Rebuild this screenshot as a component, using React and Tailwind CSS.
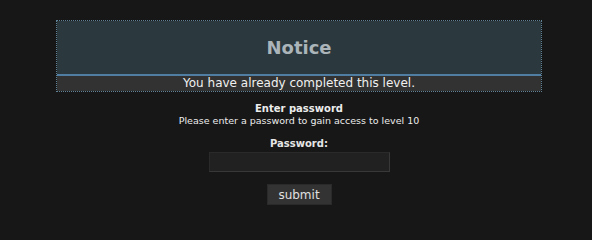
export default function App() {
    return (
        <div className="min-h-screen bg-[#171717] pt-5 font-['DejaVu_Sans',sans-serif]">
            <div className="ml-[56px] w-[486px] flex flex-col items-center">
                {/* Notice box */}
                <div className="w-full border border-dotted border-[#5f8297]">
                    <div className="h-[53px] bg-[#2b383e] flex items-center justify-center text-[18px] font-bold text-[#aab4b9]">
                        Notice
                    </div>
                    <div className="border-t-2 border-[#4f7ea2] bg-[#323232] text-center text-[12px] leading-[15px] text-[#f0f0f0]">
                        You have already completed this level.
                    </div>
                </div>

                {/* Form */}
                <div className="mt-[11px] text-center text-[10px] leading-[12px] text-[#ececec]">
                    <div className="font-bold">Enter password</div>
                    <div className="text-[9.5px]">Please enter a password to gain access to level 10</div>
                </div>
                <form className="mt-[11px] flex flex-col items-center">
                    <label className="text-[10px] leading-[12px] font-bold text-[#e6e6e6]">Password:</label>
                    <input
                        type="password"
                        className="mt-[2px] w-[181px] h-[20px] bg-[#212121] border border-[#383838] border-t-[#2a2a2a] border-l-[#2a2a2a] outline-none text-[#ddd] text-xs px-1"
                    />
                    <button
                        type="button"
                        className="mt-[12px] w-[65px] h-[21px] bg-[#333] border border-[#2a2a2a] text-[12px] text-[#e0e0e0] leading-none"
                    >
                        submit
                    </button>
                </form>
            </div>
        </div>
    );
}
